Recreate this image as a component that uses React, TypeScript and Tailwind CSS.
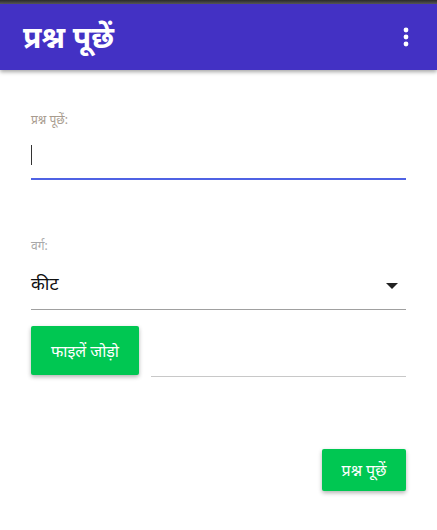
export default function App() {
  return (
    <div className="h-[530px] w-[437px] bg-white flex flex-col overflow-hidden" style={{ fontFamily: '"Noto Sans", "Liberation Sans", sans-serif' }}>
      {/* Window strip */}
      <div className="h-[4px] bg-gradient-to-b from-[#2a2a2a] to-[#5a5a5a] flex-shrink-0" />

      {/* App bar */}
      <div className="h-[66px] bg-[#4331c4] flex items-center justify-between pl-[23px] pr-[27px] shadow-[0_2px_4px_rgba(0,0,0,0.35)] flex-shrink-0 relative z-10">
        <h1 className="text-[30px] font-bold text-white leading-none">प्रश्न पूछें</h1>
        <svg width="8" height="20" viewBox="0 0 8 20">
          <circle cx="4" cy="3" r="2.4" fill="white" />
          <circle cx="4" cy="10" r="2.4" fill="white" />
          <circle cx="4" cy="17" r="2.4" fill="white" />
        </svg>
      </div>

      {/* Form */}
      <div className="flex flex-col px-[31px] pt-[44px]">
        <label className="text-[12px] text-[#a89b8e] leading-none">प्रश्न पूछें:</label>
        <div className="h-[44px] flex items-center border-b-2 border-[#4f62e4] mt-[10px]">
          <div className="w-px h-[20px] bg-[#333] mt-[-4px]" />
        </div>

        <label className="text-[12px] text-[#a8a8a8] leading-none mt-[60px]">वर्ग:</label>
        <div className="h-[52px] flex items-center justify-between border-b border-[#a0a0a0] mt-[6px]">
          <span className="text-[18px] text-[#111]">कीट</span>
          <svg width="12" height="6" viewBox="0 0 12 6" className="mr-[8px] mt-[4px]">
            <path d="M0 0h12L6 6z" fill="#222" />
          </svg>
        </div>

        <div className="flex items-end gap-[12px] mt-[16px]">
          <button className="w-[108px] h-[49px] bg-[#00c752] text-white text-[16px] rounded-[2px] shadow-[0_2px_4px_rgba(0,0,0,0.3)] flex-shrink-0">
            फाइलें जोड़ो
          </button>
          <div className="flex-1 border-b border-[#c8c8c8] mb-[-2px]" />
        </div>

        <div className="flex justify-end mt-[74px]">
          <button className="w-[84px] h-[42px] bg-[#00c752] text-white text-[16px] rounded-[2px] shadow-[0_2px_4px_rgba(0,0,0,0.3)]">
            प्रश्न पूछें
          </button>
        </div>
      </div>
    </div>
  );
}
